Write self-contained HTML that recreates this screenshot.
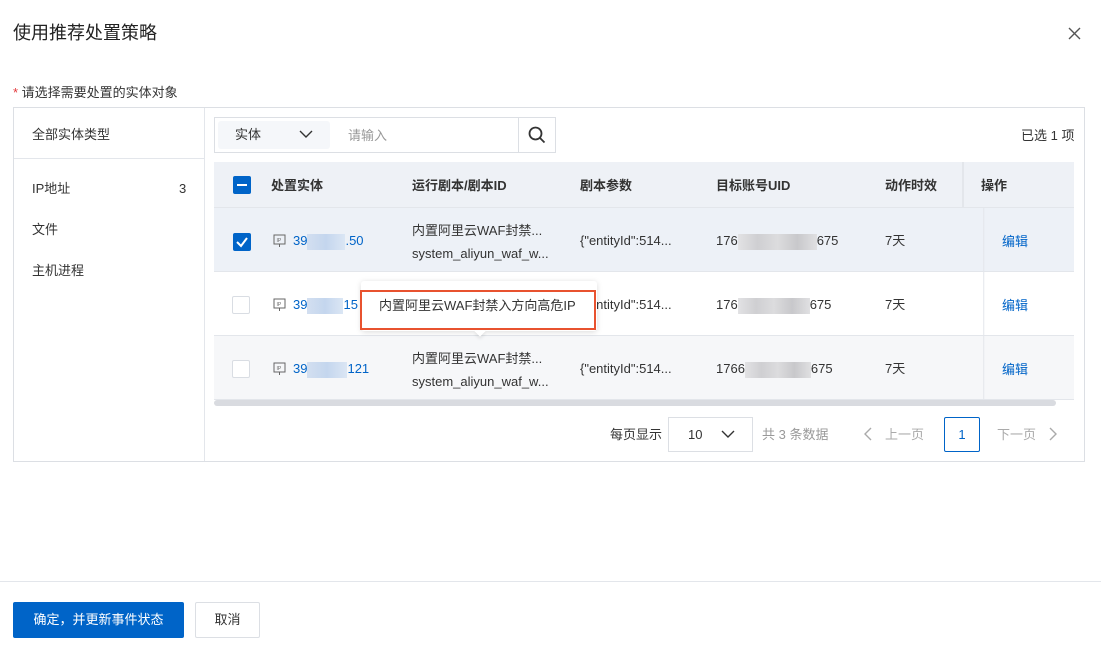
<!DOCTYPE html>
<html><head><meta charset="utf-8"><style>
*{box-sizing:border-box;margin:0;padding:0}
body{width:1101px;height:669px;background:#fff;font-family:"Liberation Sans","Noto Sans CJK SC",sans-serif;color:#333;font-size:13px;position:relative;overflow:hidden;line-height:15px}
.a{position:absolute;white-space:nowrap}
.blue{color:#0064c8}
.row{position:absolute;left:214px;width:860px;height:64px;border-bottom:1px solid #e3e6eb}
.cb{position:absolute;width:18px;height:18px;border:1px solid #d9dde3;border-radius:2px;background:#fff}
.blur{display:inline-block;height:16px;vertical-align:middle;background:linear-gradient(90deg,#d3dff0,#c4d6ee,#dbe6f4)}
.gblur{display:inline-block;height:16px;vertical-align:middle;background:linear-gradient(90deg,#e2e2e4,#cfcfd2,#dcdcde,#c8c8cb,#e0e0e2)}
</style></head><body>
<div class="a" style="left:13px;top:22px;font-size:18px;line-height:22px;color:#222">使用推荐处置策略</div>
<svg class="a" style="left:1068px;top:27px" width="13" height="13"><path d="M1 1L12 12M12 1L1 12" stroke="#555" stroke-width="1.4"/></svg>
<div class="a" style="left:13px;top:85px;font-size:13px"><span style="color:#e4393c">*</span> 请选择需要处置的实体对象</div>
<div class="a" style="left:13px;top:107px;width:1072px;height:355px;border:1px solid #dcdfe4"></div>
<div class="a" style="left:204px;top:108px;width:1px;height:353px;background:#e3e6eb"></div>
<div class="a" style="left:14px;top:158px;width:190px;height:1px;background:#e3e6eb"></div>
<div class="a" style="left:32px;top:127px">全部实体类型</div>
<div class="a" style="left:32px;top:181px">IP地址</div><div class="a" style="left:179px;top:181px">3</div>
<div class="a" style="left:32px;top:222px">文件</div>
<div class="a" style="left:32px;top:263px">主机进程</div>
<div class="a" style="left:214px;top:117px;width:342px;height:36px;border:1px solid #dcdfe4"></div>
<div class="a" style="left:218px;top:121px;width:112px;height:28px;background:#f5f7fa;border-radius:3px"></div>
<div class="a" style="left:235px;top:127px">实体</div>
<svg class="a" style="left:299px;top:130px" width="14" height="9"><path d="M1 1L7 7L13 1" stroke="#333" stroke-width="1.4" fill="none"/></svg>
<div class="a" style="left:348px;top:128px;color:#999">请输入</div>
<div class="a" style="left:518px;top:118px;width:1px;height:34px;background:#dcdfe4"></div>
<svg class="a" style="left:528px;top:126px" width="18" height="18"><circle cx="7.5" cy="7.5" r="6" stroke="#333" stroke-width="1.8" fill="none"/><path d="M12 12L16.5 16.5" stroke="#333" stroke-width="1.8"/></svg>
<div class="a" style="left:1021px;top:128px">已选 1 项</div>
<div class="a" style="left:214px;top:162px;width:860px;height:46px;background:#eef1f6;border-bottom:1px solid #e3e6eb;font-weight:bold">
<div class="a" style="left:57px;top:16px">处置实体</div><div class="a" style="left:198px;top:16px">运行剧本/剧本ID</div><div class="a" style="left:366px;top:16px">剧本参数</div><div class="a" style="left:502px;top:16px">目标账号UID</div><div class="a" style="left:671px;top:16px">动作时效</div>
<div class="a" style="left:748px;top:0;width:2px;height:46px;background:#e3e6eb"></div><div class="a" style="left:767px;top:16px">操作</div></div>
<div class="a" style="left:233px;top:176px;width:18px;height:18px;background:#0064c8;border-radius:2px"><div style="position:absolute;left:4px;top:8px;width:10px;height:2px;background:#fff"></div></div>

<div class="row" style="top:208px;background:#edf1f7"></div>
<div class="row" style="top:272px;background:#fff"></div>
<div class="row" style="top:336px;background:#f6f7f9"></div>
<div class="a" style="left:983px;top:208px;width:2px;height:192px;background:linear-gradient(90deg,#e3e6eb,transparent)"></div>
<div class="a" style="left:214px;top:400px;width:842px;height:6px;background:#d9dbe0;border-radius:3px"></div>

<div class="a" style="left:233px;top:233px;width:18px;height:18px;background:#0064c8;border-radius:2px"><svg width="18" height="18"><path d="M4 9L8 13L14 5" stroke="#fff" stroke-width="2" fill="none"/></svg></div>
<div class="cb" style="left:232px;top:296px"></div><div class="cb" style="left:232px;top:360px"></div>

<svg class="a" style="left:273px;top:234px" width="14" height="14"><rect x="1" y="1" width="11" height="9" stroke="#666" fill="none"/><path d="M6.5 10V13" stroke="#666"/><text x="3.5" y="8" font-size="5" fill="#666">IP</text></svg>
<svg class="a" style="left:273px;top:298px" width="14" height="14"><rect x="1" y="1" width="11" height="9" stroke="#666" fill="none"/><path d="M6.5 10V13" stroke="#666"/><text x="3.5" y="8" font-size="5" fill="#666">IP</text></svg>
<svg class="a" style="left:273px;top:362px" width="14" height="14"><rect x="1" y="1" width="11" height="9" stroke="#666" fill="none"/><path d="M6.5 10V13" stroke="#666"/><text x="3.5" y="8" font-size="5" fill="#666">IP</text></svg>
<div class="a blue" style="left:293px;top:233px">39<span class="blur" style="width:38px"></span>.50</div>
<div class="a blue" style="left:293px;top:297px">39<span class="blur" style="width:36px"></span>15</div>
<div class="a blue" style="left:293px;top:361px">39<span class="blur" style="width:40px"></span>121</div>

<div class="a" style="left:412px;top:219px;line-height:23px">内置阿里云WAF封禁...<br>system_aliyun_waf_w...</div>
<div class="a" style="left:412px;top:347px;line-height:23px">内置阿里云WAF封禁...<br>system_aliyun_waf_w...</div>
<div class="a" style="left:580px;top:233px">{"entityId":514...</div>
<div class="a" style="left:580px;top:297px">{"entityId":514...</div>
<div class="a" style="left:580px;top:361px">{"entityId":514...</div>
<div class="a" style="left:716px;top:233px">176<span class="gblur" style="width:79px"></span>675</div>
<div class="a" style="left:716px;top:297px">176<span class="gblur" style="width:72px"></span>675</div>
<div class="a" style="left:716px;top:361px">1766<span class="gblur" style="width:66px"></span>675</div>
<div class="a" style="left:885px;top:233px">7天</div><div class="a" style="left:885px;top:297px">7天</div><div class="a" style="left:885px;top:361px">7天</div>
<div class="a blue" style="left:1002px;top:234px">编辑</div><div class="a blue" style="left:1002px;top:298px">编辑</div><div class="a blue" style="left:1002px;top:362px">编辑</div>

<div class="a" style="left:361px;top:281px;width:236px;height:50px;background:#fff;box-shadow:0 1px 6px rgba(0,0,0,.15);border-radius:3px"></div>
<div class="a" style="left:476px;top:327px;width:8px;height:8px;background:#fff;transform:rotate(45deg);box-shadow:2px 2px 3px rgba(0,0,0,.08)"></div>
<div class="a" style="left:360px;top:290px;width:236px;height:40px;border:2px solid #e8522f;background:#fff"></div>
<div class="a" style="left:379px;top:298px">内置阿里云WAF封禁入方向高危IP</div>

<div class="a" style="left:610px;top:427px">每页显示</div>
<div class="a" style="left:668px;top:417px;width:85px;height:35px;border:1px solid #dcdfe4"></div>
<div class="a" style="left:688px;top:427px">10</div>
<svg class="a" style="left:721px;top:430px" width="14" height="9"><path d="M1 1L7 7L13 1" stroke="#333" stroke-width="1.4" fill="none"/></svg>
<div class="a" style="left:762px;top:427px;color:#999">共 3 条数据</div>
<svg class="a" style="left:864px;top:427px" width="9" height="14"><path d="M7 1L1 7L7 13" stroke="#aaa" stroke-width="1.4" fill="none"/></svg>
<div class="a" style="left:885px;top:427px;color:#aaa">上一页</div>
<div class="a" style="left:944px;top:417px;width:36px;height:35px;border:1px solid #0064c8;border-radius:2px;text-align:center;line-height:33px;color:#0064c8">1</div>
<div class="a" style="left:997px;top:427px;color:#aaa">下一页</div>
<svg class="a" style="left:1049px;top:427px" width="9" height="14"><path d="M1 1L7 7L1 13" stroke="#aaa" stroke-width="1.4" fill="none"/></svg>

<div class="a" style="left:0;top:581px;width:1101px;height:1px;background:#e3e6eb"></div>
<div class="a" style="left:13px;top:602px;width:171px;height:36px;background:#0064c8;color:#fff;text-align:center;line-height:36px;border-radius:2px">确定，并更新事件状态</div>
<div class="a" style="left:195px;top:602px;width:65px;height:36px;border:1px solid #dcdfe4;text-align:center;line-height:34px;border-radius:2px">取消</div>
</body></html>
